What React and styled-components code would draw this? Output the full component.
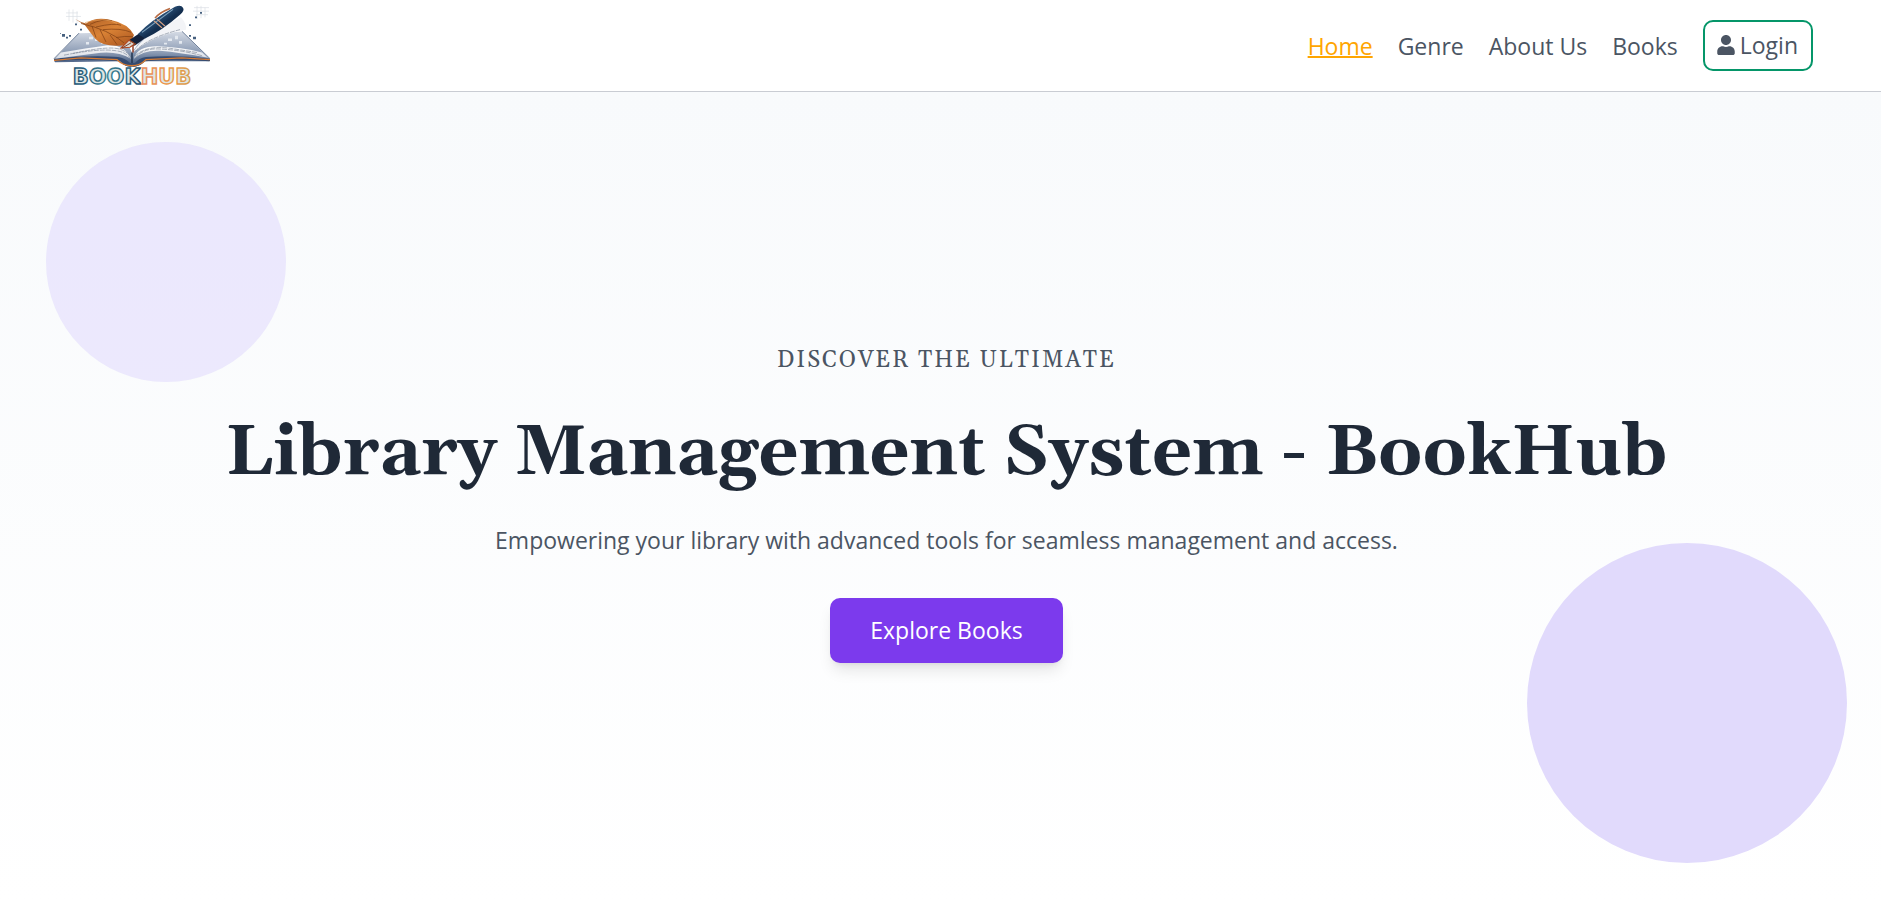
import React from "react";
import styled, { createGlobalStyle } from "styled-components";
import { FaUser } from "react-icons/fa";

const GlobalStyle = createGlobalStyle`
  *, *::before, *::after { box-sizing: border-box; }
  body {
    margin: 0;
    background: #ffffff;
    color: #4b5563;
    font-family: "Open Sans", "Noto Sans", sans-serif;
    font-size: 23px;
    line-height: 36px;
  }
`;

const Page = styled.div`
  display: flex;
  flex-direction: column;
  min-height: 100vh;
`;

const Header = styled.header`
  display: flex;
  align-items: center;
  justify-content: space-between;
  height: 92px;
  padding: 0 68px 0 52px;
  background: #ffffff;
  border-bottom: 1px solid #c9ccd3;
`;

const LogoLink = styled.a`
  display: block;
  svg { display: block; overflow: visible; }
`;

const Nav = styled.nav`
  display: flex;
  align-items: center;
  gap: 25px;
`;

const NavLink = styled.a`
  color: ${(p) => (p.$active ? "#ffa500" : "#4b5563")};
  text-decoration: ${(p) => (p.$active ? "underline" : "none")};
  text-decoration-thickness: 2px;
`;

const LoginButton = styled.button`
  display: flex;
  align-items: center;
  gap: 5px;
  padding: 5px 13px 6px 12px;
  border: 2px solid #059669;
  border-radius: 10px;
  background: transparent;
  color: #4b5563;
  font: inherit;
  cursor: pointer;
  svg { width: 18px; height: 20px; }
`;

const Hero = styled.main`
  position: relative;
  flex: 1;
  display: flex;
  flex-direction: column;
  align-items: center;
  padding: 251px 2px 48px 14px;
  overflow: hidden;
  text-align: center;
  background: linear-gradient(to bottom, #f8fafc, #ffffff);
`;

const Circle = styled.span`
  position: absolute;
  width: ${(p) => p.$size}px;
  height: ${(p) => p.$size}px;
  border-radius: 50%;
  background: ${(p) => p.$color};
`;

const SmallCircle = styled(Circle)`
  top: 50px;
  left: 46px;
`;

const LargeCircle = styled(Circle)`
  right: 34px;
  bottom: 41px;
`;

const Eyebrow = styled.p`
  position: relative;
  margin: 0;
  font-family: Georgia, Gelasio, "Liberation Serif", serif;
  letter-spacing: 2px;
  text-transform: uppercase;
`;

const Title = styled.h1`
  position: relative;
  margin: 39px 0 0;
  color: #1f2937;
  font-family: Georgia, Gelasio, "Liberation Serif", serif;
  font-size: 70px;
  line-height: 72px;
  font-weight: 700;
`;

const Lead = styled.p`
  position: relative;
  margin: 32px 0 0;
`;

const ExploreButton = styled.button`
  position: relative;
  margin-top: 40px;
  padding: 14px 40px 15px;
  border: 0;
  border-radius: 10px;
  background: #7c3aed;
  color: #ffffff;
  font: inherit;
  font-weight: 500;
  cursor: pointer;
  box-shadow: 0 10px 15px -3px rgba(0, 0, 0, 0.1), 0 4px 6px -4px rgba(0, 0, 0, 0.1);
`;

const Wordmark = styled.text`
  font-family: "DejaVu Sans", sans-serif;
  font-size: 21px;
  font-weight: 700;
`;

function Logo() {
  return (
    <svg width="160" height="84" viewBox="0 0 160 84" role="img" aria-label="BookHub">
      <defs>
        <linearGradient id="leaf" x1="0" y1="0" x2="1" y2="1">
          <stop offset="0" stopColor="#a85a24" />
          <stop offset="0.5" stopColor="#d98235" />
          <stop offset="1" stopColor="#a9541f" />
        </linearGradient>
        <linearGradient id="pen" x1="0" y1="0" x2="1" y2="1">
          <stop offset="0.3" stopColor="#35608a" />
          <stop offset="0.55" stopColor="#142f50" />
          <stop offset="1" stopColor="#0d1d36" />
        </linearGradient>
        <linearGradient id="cover" x1="0" y1="0" x2="0" y2="1">
          <stop offset="0" stopColor="#d5dbe5" />
          <stop offset="0.6" stopColor="#8b9bb4" />
          <stop offset="1" stopColor="#354d75" />
        </linearGradient>
        <linearGradient id="sheet" x1="0" y1="0" x2="0" y2="1">
          <stop offset="0" stopColor="#ffffff" />
          <stop offset="1" stopColor="#d5dae3" />
        </linearGradient>
        <linearGradient id="word" x1="0" y1="0" x2="1" y2="0">
          <stop offset="0" stopColor="#235072" />
          <stop offset="0.3" stopColor="#397f90" />
          <stop offset="0.57" stopColor="#254f70" />
          <stop offset="0.58" stopColor="#e58b62" />
          <stop offset="0.8" stopColor="#ec9546" />
          <stop offset="1" stopColor="#d89c4e" />
        </linearGradient>
      </defs>
      <g transform="translate(0 1) scale(1 0.88)">
        <g fill="none" stroke="#d9dde3" strokeWidth="0.7">
          <path d="M14 9H26M14 13H29M17 5V18M21 5V20M25 7V21M142 3H157M141 7H157M144 11H156M145 1V16M149 1V15M153 3V14" />
        </g>
        <g fill="#46607f">
          <path d="M10 33h3v3h-3zM14 36h2v2h-2zM17 34h2v2h-2zM23 21h2v2h-2zM28 27h2v2h-2zM143 13h2v2h-2zM148 8h2v2h-2zM141 36h3v3h-3zM137 34h2v2h-2zM137 22h2v2h-2zM8 32h1v1h-1z" />
        </g>
        <path d="M2 62 27 32 70 31 80 54 93 33 130 30 158 62 157 64 92 64Q87 71 80 70Q73 71 69 64L3 65Z" fill="url(#cover)" />
        <path d="M2 61 27 32M158 61 130 30" stroke="#43587a" strokeWidth="0.8" />
        <path d="M2 61Q36 57 66 59Q73 60 78 66H83Q87 60 94 59Q126 57 158 61V64Q120 61 93 64Q87 71 80 70Q73 71 68 64Q34 61 2 64Z" fill="#354b70" />
        <path d="M2 63 29 60 65 62Q71 69 80 69Q88 69 94 62L130 60 158 62" fill="none" stroke="#d57a33" strokeWidth="1.5" />
        <path d="M9 54Q35 49 54 46Q72 44 79 61Q64 51 43 55L3 61Z" fill="url(#sheet)" />
        <path d="M82 61Q85 47 105 47Q130 48 150 54L156 60Q128 54 108 52Q91 51 82 61Z" fill="url(#sheet)" />
        <path d="M81 54Q91 34 129 14Q135 22 134 28Q101 34 81 54Z" fill="#f3f4f7" />
        <path d="M12 57Q48 49 64 52Q73 53 79 61M21 55Q49 48 62 49Q73 50 79 59M83 60Q91 49 107 50Q130 51 151 58M83 58Q94 46 117 49L145 54M83 53Q94 38 128 28" fill="none" stroke="#7d8899" strokeWidth="0.7" strokeDasharray="5 1" />
        <path d="M80 54V66" stroke="#263955" strokeWidth="1.6" />
        <path d="M37 36h4v3h-4zM43 38h3v3h-3zM34 42h3v3h-3zM49 42h3v2h-3zM116 38h4v3h-4zM123 35h3v4h-3zM127 41h3v3h-3zM112 43h3v2h-3z" fill="#e4e9f0" />
        <path d="M23 16Q29 20 34 21Q43 13 59 17Q76 21 82 34Q79 45 70 46Q51 48 43 38Q38 31 33 23L23 16Z" fill="url(#leaf)" />
        <path d="M29 21Q57 28 72 43M38 22Q51 15 60 18M44 25Q62 20 69 23M51 28Q69 26 79 31M40 24 44 37M48 28 54 42M58 34 65 45M64 37Q73 35 81 36" fill="none" stroke="#844315" strokeWidth="0.8" />
        <path d="M33 20Q52 13 65 21" fill="none" stroke="#eba259" strokeWidth="0.7" />
        <path d="M77 40 89 31 94 37 83 46 69 49Z" fill="#13213b" />
        <path d="M77 40 83 44 78 48 69 49Z" fill="#d8d6d0" stroke="#b3471f" strokeWidth="1.2" />
        <path d="M70 49 79 43M78 40 84 45" stroke="#703d29" strokeWidth="1" />
        <path d="M86 33Q98 18 123 2Q129-1 131 3Q133 6 128 11Q110 29 93 38Z" fill="url(#pen)" />
        <path d="M90 31 121 5" stroke="#7fa2bd" strokeWidth="1.2" />
        <path d="M102 18 110 26M105 16 113 24" stroke="#d4a184" strokeWidth="1.4" />
        <path d="M118 4Q108 8 103 15" fill="none" stroke="#b86b43" strokeWidth="1.6" />
        <path d="M81 46V54" stroke="#954127" strokeWidth="1.5" />
      </g>
      <Wordmark x="80" y="80" textAnchor="middle" fill="#dfe6e4" stroke="url(#word)" strokeWidth="1.4">BOOKHUB</Wordmark>
    </svg>
  );
}

const links = ["Home", "Genre", "About Us", "Books"];

export default function App() {
  return (
    <Page>
      <GlobalStyle />
      <Header>
        <LogoLink href="#home" aria-label="BookHub home">
          <Logo />
        </LogoLink>
        <Nav aria-label="Main">
          {links.map((label, i) => (
            <NavLink key={label} href="#" $active={i === 0}>{label}</NavLink>
          ))}
          <LoginButton type="button">
            <FaUser aria-hidden="true" />
            Login
          </LoginButton>
        </Nav>
      </Header>
      <Hero>
        <SmallCircle $size={240} $color="rgba(221, 214, 254, 0.5)" />
        <LargeCircle $size={320} $color="#e1dafc" />
        <Eyebrow>Discover the Ultimate</Eyebrow>
        <Title>Library Management System - BookHub</Title>
        <Lead>Empowering your library with advanced tools for seamless management and access.</Lead>
        <ExploreButton type="button">Explore Books</ExploreButton>
      </Hero>
    </Page>
  );
}
